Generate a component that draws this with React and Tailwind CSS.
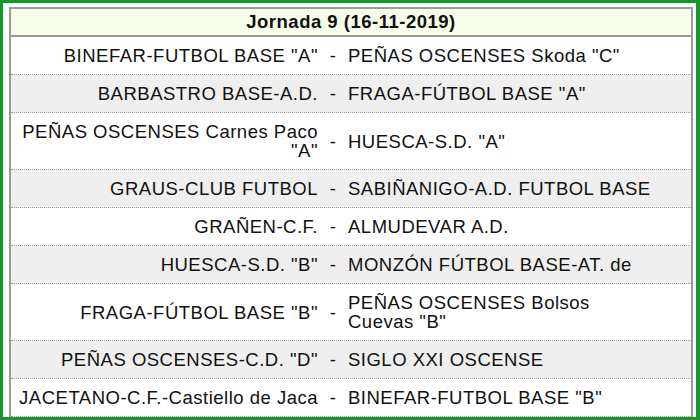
import React from "react";

const partidos = [
  ["BINEFAR-FUTBOL BASE \"A\"", "PEÑAS OSCENSES Skoda \"C\""],
  ["BARBASTRO BASE-A.D.", "FRAGA-FÚTBOL BASE \"A\""],
  ["PEÑAS OSCENSES Carnes Paco \"A\"", "HUESCA-S.D. \"A\""],
  ["GRAUS-CLUB FUTBOL", "SABIÑANIGO-A.D. FUTBOL BASE"],
  ["GRAÑEN-C.F.", "ALMUDEVAR A.D."],
  ["HUESCA-S.D. \"B\"", "MONZÓN FÚTBOL BASE-AT. de"],
  ["FRAGA-FÚTBOL BASE \"B\"", "PEÑAS OSCENSES Bolsos Cuevas \"B\""],
  ["PEÑAS OSCENSES-C.D. \"D\"", "SIGLO XXI OSCENSE"],
  ["JACETANO-C.F.-Castiello de Jaca", "BINEFAR-FUTBOL BASE \"B\""],
];

export default function App() {
  return (
    <div className="w-[700px] h-[420px] overflow-hidden bg-white border-t-[3px] border-l-[3px] border-b-[3px] border-r-[4px] border-[#15962b] font-['Liberation_Sans',Arial,sans-serif] text-[#111] tracking-[0.5px]">
      <div className="ml-[6px] mr-[3px] mt-[4px] border-t-2 border-x-2 border-[#9a9a9a]">
        {/* cabecera */}
        <div className="h-[28px] bg-[#f6fde8] border-b-2 border-[#9a9a9a] flex items-center justify-center text-[18.5px] font-bold">
          Jornada 9 (16-11-2019)
        </div>
        {partidos.map(([local, visitante], i) => (
          <div
            key={i}
            className={`flex items-center py-[9px] border-b border-dotted border-[#9a9a9a] text-[18.5px] leading-[19px] ${i % 2 === 1 ? "bg-[#efefef]" : "bg-white"}`}
          >
            <div className="w-[307px] pl-[2px] text-right">{local}</div>
            <div className="w-[30px] text-center">-</div>
            <div className="w-[308px]">{visitante}</div>
          </div>
        ))}
      </div>
    </div>
  );
}
